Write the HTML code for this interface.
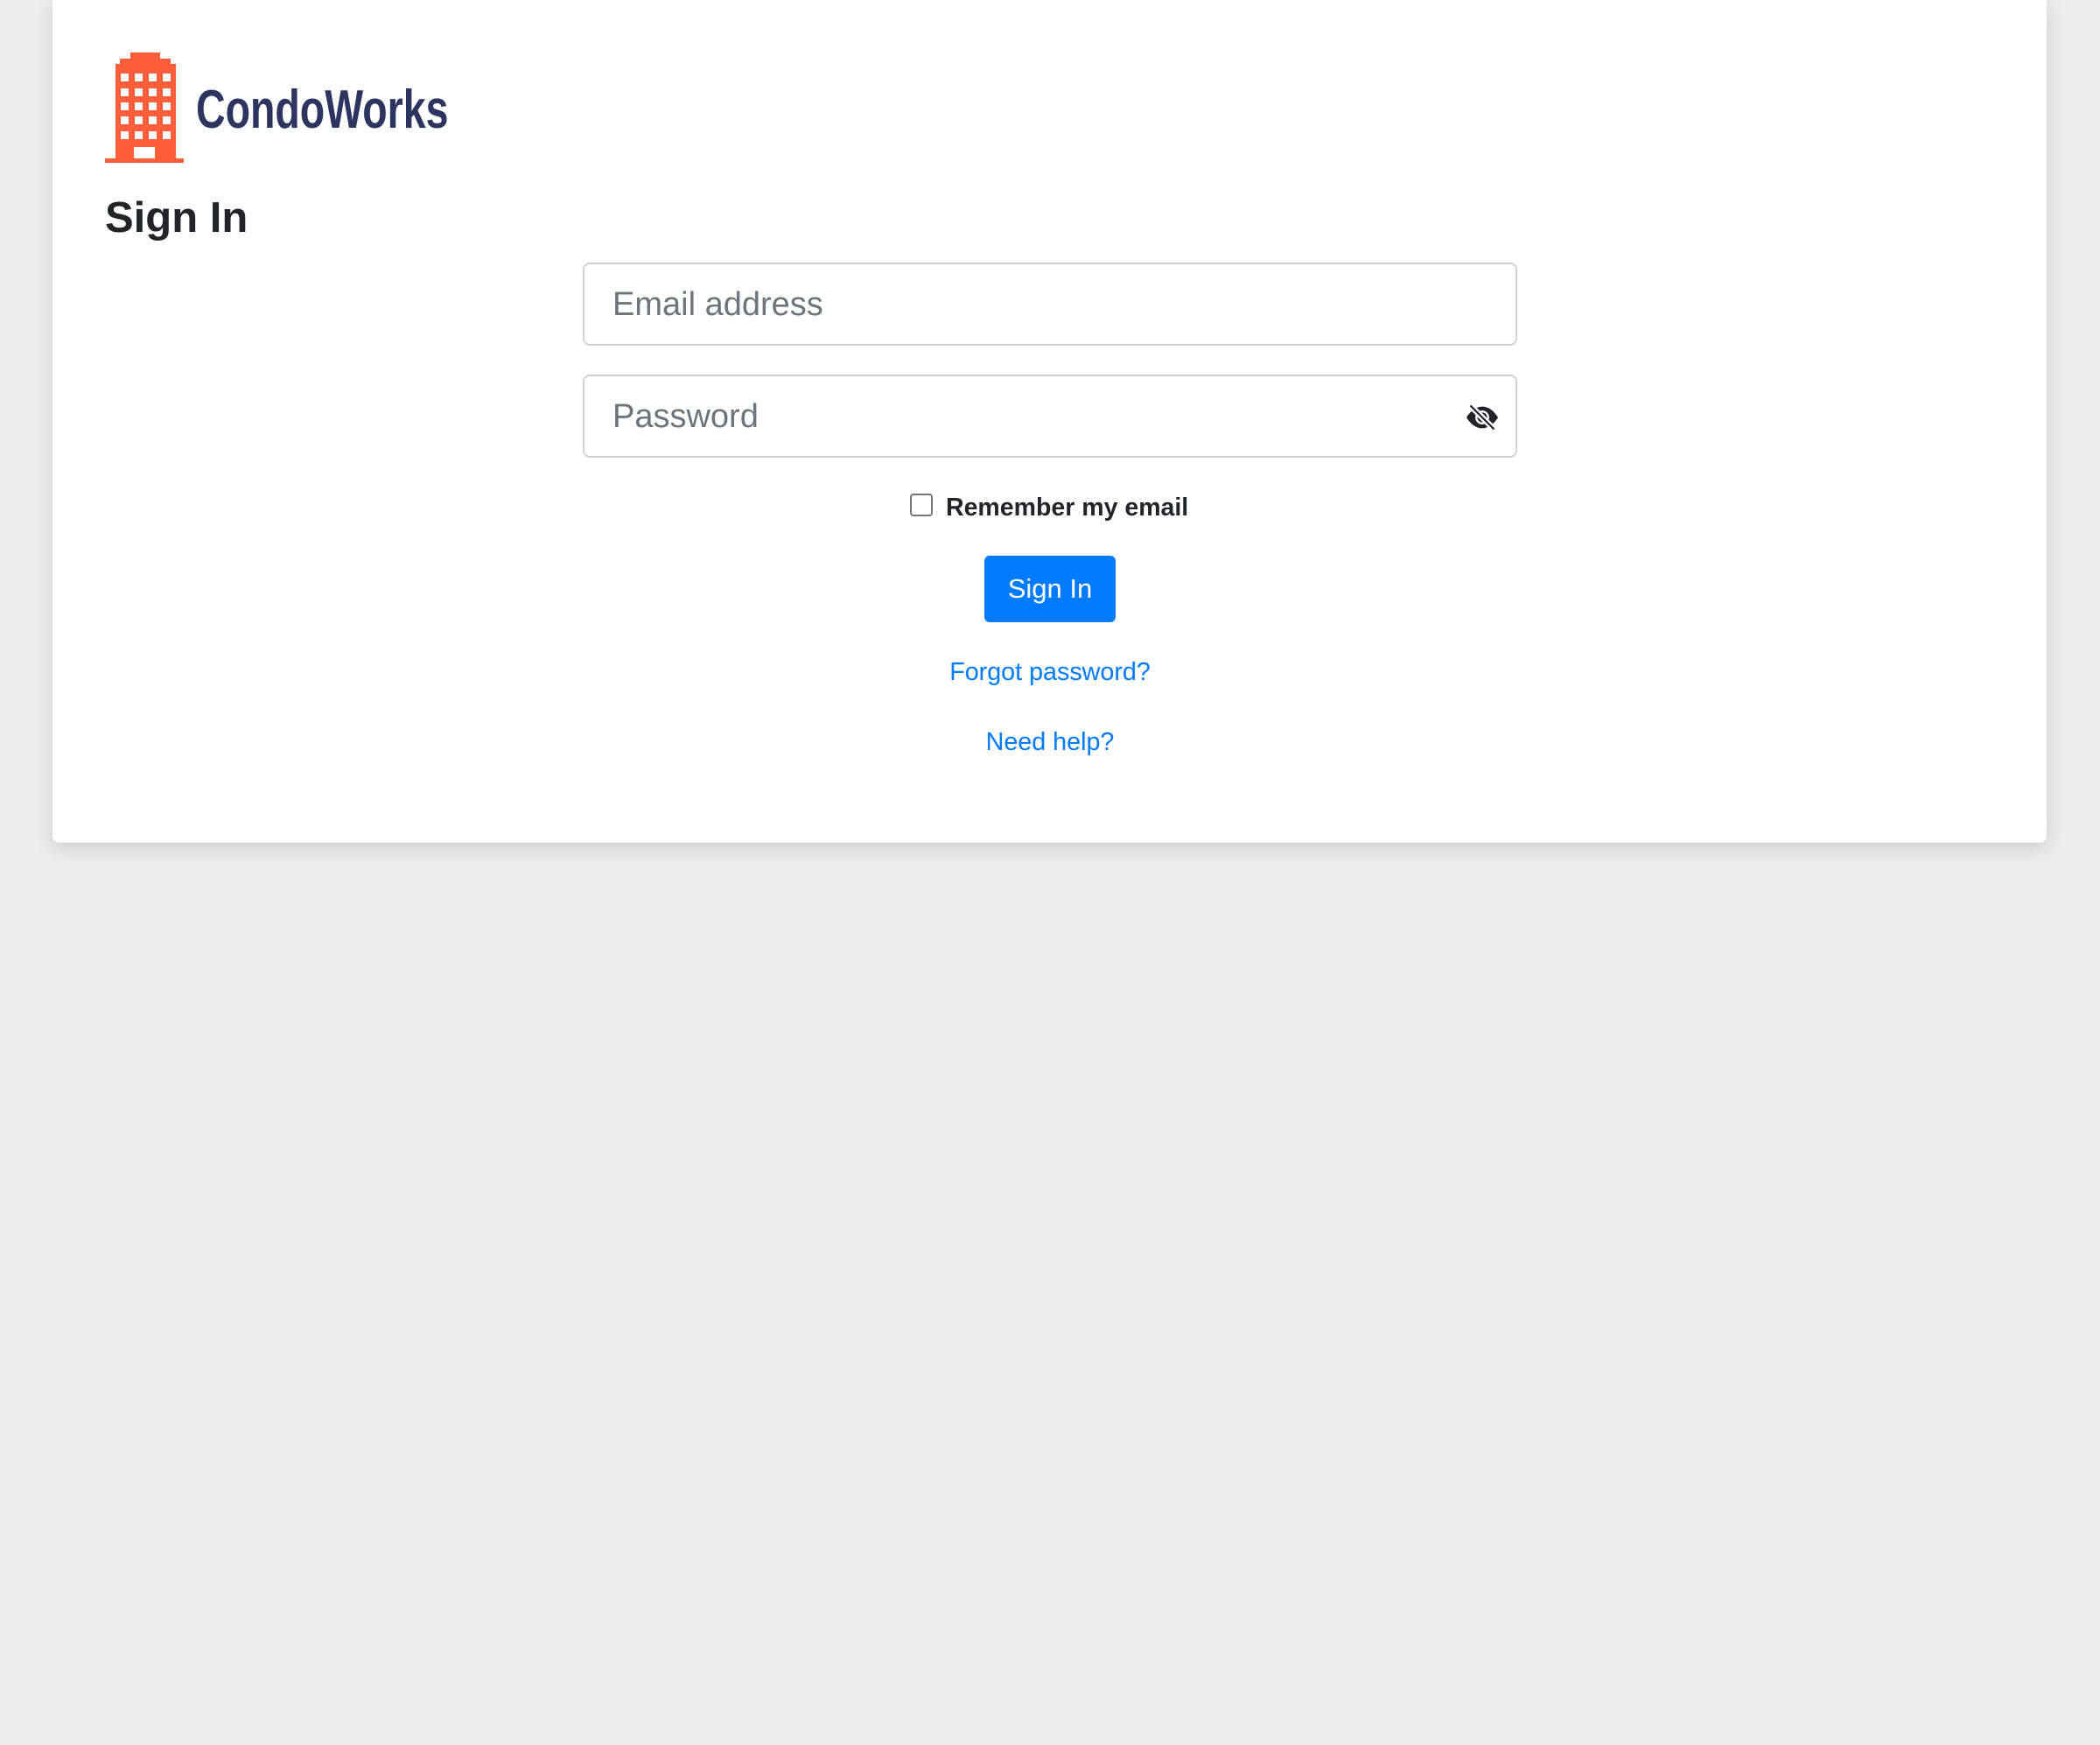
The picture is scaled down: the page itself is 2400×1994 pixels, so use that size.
<!DOCTYPE html>
<html><head><meta charset="utf-8"><style>
html,body{margin:0;padding:0;}
body{width:2400px;height:1994px;background:#eeeeee;font-family:"Liberation Sans",sans-serif;position:relative;overflow:hidden;}
.card{position:absolute;left:60px;top:0;width:2279px;height:963px;background:#fff;border-radius:0 0 8px 8px;box-shadow:0 6px 24px rgba(0,0,0,0.15);}
.abs{position:absolute;}
.brand{position:absolute;left:224px;top:95px;font-family:"Liberation Sans Narrow","Liberation Sans",sans-serif;font-weight:bold;font-size:62px;color:#2b3560;line-height:1;transform:scaleX(0.75);transform-origin:0 0;white-space:nowrap;}
h1{position:absolute;left:120px;top:220px;margin:0;font-size:49px;font-weight:bold;color:#212529;line-height:1.2;}
.inp{position:absolute;left:666px;width:1068px;height:95px;border:2px solid #ced4da;border-radius:8px;box-sizing:border-box;}
.ph{position:absolute;left:32px;top:0;line-height:92px;font-size:38px;color:#6c757d;}
.cb{position:absolute;left:1040px;top:564px;width:22px;height:22px;border:2px solid #767676;border-radius:4px;}
.lbl{position:absolute;left:1081px;top:564px;font-size:28.5px;font-weight:bold;color:#212529;line-height:32px;}
.btn{position:absolute;left:1125px;top:635px;width:150px;height:76px;background:#007bff;border-radius:6px;color:#fff;font-size:31px;line-height:76px;text-align:center;}
.lnk{position:absolute;left:0;width:2400px;text-align:center;color:#007bff;font-size:28.7px;line-height:32px;}
</style></head><body>
<div class="card"></div>
<svg class="abs" style="left:0;top:0" width="600" height="200">
<g fill="#ff5e3a">
<rect x="149" y="60" width="34" height="7"/>
<rect x="137" y="67" width="58" height="6"/>
<rect x="132" y="73" width="69" height="108"/>
<rect x="120" y="181" width="90" height="5"/>
</g>
<g fill="#fff">
<rect x="138" y="84" width="9" height="9"/><rect x="154" y="84" width="9" height="9"/><rect x="170" y="84" width="9" height="9"/><rect x="186" y="84" width="9" height="9"/>
<rect x="138" y="101" width="9" height="9"/><rect x="154" y="101" width="9" height="9"/><rect x="170" y="101" width="9" height="9"/><rect x="186" y="101" width="9" height="9"/>
<rect x="138" y="117" width="9" height="9"/><rect x="154" y="117" width="9" height="9"/><rect x="170" y="117" width="9" height="9"/><rect x="186" y="117" width="9" height="9"/>
<rect x="138" y="133" width="9" height="9"/><rect x="154" y="133" width="9" height="9"/><rect x="170" y="133" width="9" height="9"/><rect x="186" y="133" width="9" height="9"/>
<rect x="138" y="150" width="9" height="9"/><rect x="154" y="150" width="9" height="9"/><rect x="170" y="150" width="9" height="9"/><rect x="186" y="150" width="9" height="9"/>
<rect x="153" y="168" width="24" height="13"/>
</g>
</svg>
<div class="brand">CondoWorks</div>
<h1>Sign In</h1>
<div class="inp" style="top:300px"><div class="ph">Email address</div></div>
<div class="inp" style="top:428px"><div class="ph">Password</div>
<svg class="abs" style="left:1004px;top:29px" width="44" height="36" viewBox="0 0 16 16"><path fill="#212529" d="M10.79 12.912l-1.614-1.615a3.5 3.5 0 0 1-4.474-4.474l-2.06-2.06C.938 6.278 0 8 0 8s3 5.5 8 5.5a7.030 7.030 0 0 0 2.79-.588zM5.21 3.088A7.030 7.030 0 0 1 8 2.5c5 0 8 5.5 8 5.5s-.939 1.721-2.641 3.238l-2.062-2.062a3.5 3.5 0 0 0-4.474-4.474L5.21 3.089z"/><path fill="#212529" d="M5.525 7.646a2.5 2.5 0 0 0 2.829 2.829l-2.830-2.829zm4.95.708l-2.829-2.83a2.5 2.5 0 0 1 2.829 2.829zm3.171 6l-12-12 .708-.708 12 12-.708.708z"/></svg>
</div>
<div class="cb"></div>
<div class="lbl">Remember my email</div>
<div class="btn">Sign In</div>
<div class="lnk" style="top:752px">Forgot password?</div>
<div class="lnk" style="top:832px">Need help?</div>
</body></html>
